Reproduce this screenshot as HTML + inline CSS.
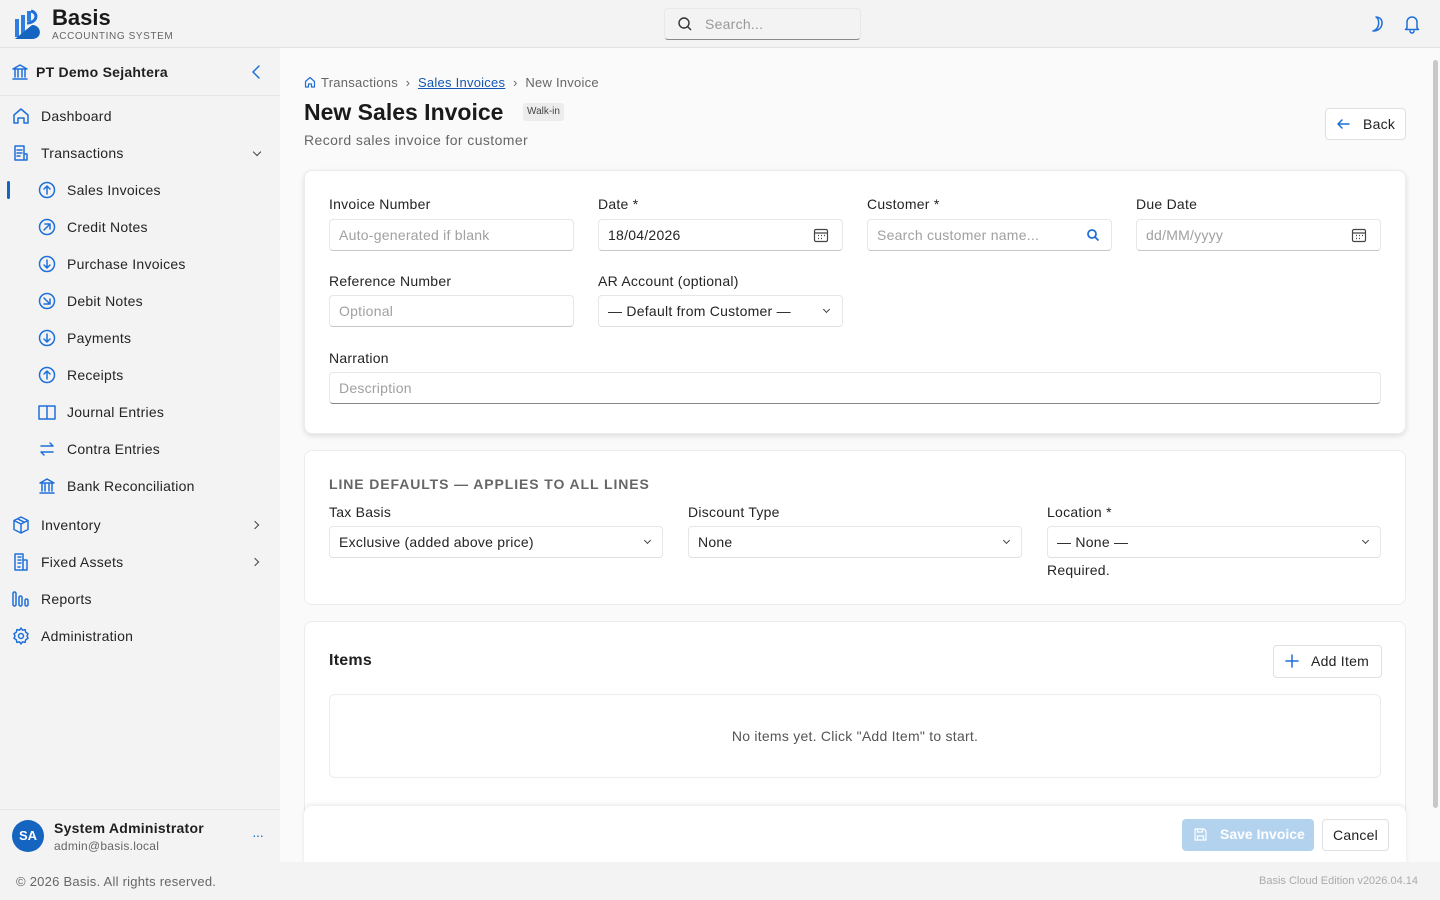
<!DOCTYPE html>
<html><head><meta charset="utf-8"><style>
*{box-sizing:border-box;margin:0;padding:0}
body{width:1440px;height:900px;overflow:hidden;background:#f3f3f3;font-family:"Liberation Sans",sans-serif;color:#1f1f1f;position:relative;font-size:14px;letter-spacing:.25px}
.a{position:absolute}
.ic{position:absolute;stroke:#1e6fd9;fill:none;stroke-width:1.5;stroke-linecap:round;stroke-linejoin:round}
.nav{position:absolute;font-size:14px;color:#242424}
.lbl{position:absolute;font-size:14px;color:#242424}
.inp{position:absolute;height:32px;background:#fff;border:1px solid #e6e6e6;border-bottom-color:#c8c8c8;border-radius:4px;font-size:14px;padding:0 9px;line-height:30px;color:#a0a0a0}
.inp.v{color:#242424}
.card{position:absolute;background:#fff;border:1px solid #ececec;border-radius:8px}
.chev{position:absolute;width:6px;height:6px;border-right:1.3px solid #444;border-bottom:1.3px solid #444;transform:rotate(45deg)}
</style></head><body>
<div class="a" style="left:0;top:0;width:1440px;height:48px;background:#f3f3f3;border-bottom:1px solid #e2e2e2"></div>
<svg class="a" style="left:12px;top:7px" width="30" height="34" viewBox="0 0 30 34"><path d="M3 12h4v18H3zM9 8h4v22H9zM15 4h4v10h-4z" fill="#2d7ee0"/><path d="M3 32 L20 18 C30 18 31 32 20 32 Z" fill="#1565c0"/><path d="M15 16c10 0 12-10 4-12" stroke="#1e6fd9" stroke-width="3" fill="none"/></svg>
<div class="a" style="left:52px;top:5px;font-size:22px;font-weight:bold;color:#1a1a1a;letter-spacing:0">Basis</div>
<div class="a" style="left:52px;top:31px;font-size:10px;letter-spacing:.6px;color:#666">ACCOUNTING SYSTEM</div>
<div class="a" style="left:664px;top:8px;width:197px;height:32px;background:#f3f3f3;border:1px solid #e8e8e8;border-bottom:1px solid #8a8a8a;border-radius:4px"></div>
<svg class="a" style="left:677px;top:16px" width="16" height="16" viewBox="0 0 16 16" fill="none" stroke="#333" stroke-width="1.4"><circle cx="7" cy="7" r="5"/><path d="M10.5 10.5L14 14"/></svg>
<div class="a" style="left:705px;top:16px;color:#999;font-size:14px">Search...</div>
<svg class="ic" style="left:1367px;top:15px" width="18" height="18" viewBox="0 0 18 18"><path d="M9 2c4 2 4 12-3 14 5 0 9-3 9-8S11 2 9 2z"/></svg>
<svg class="ic" style="left:1403px;top:14px" width="18" height="20" viewBox="0 0 18 20"><path d="M4 14V8a5 5 0 0110 0v6l1.5 1.5h-13z M7 17a2 2 0 004 0"/></svg>
<div class="a" style="left:0;top:48px;width:280px;height:814px;background:#f3f3f3"></div>
<div class="a" style="left:0;top:95px;width:280px;height:1px;background:#e6e6e6"></div>
<svg class="ic" style="left:11px;top:63px" width="18" height="18" viewBox="0 0 18 18"><path d="M2 6l7-4 7 4zM2 16h14M4 7v7M7 7v7M11 7v7M14 7v7"/></svg>
<div class="a" style="left:36px;top:64px;font-size:14px;font-weight:bold">PT Demo Sejahtera</div>
<svg class="ic" style="left:250px;top:64px" width="12" height="16" viewBox="0 0 12 16"><path d="M9 2L3 8l6 6"/></svg>
<svg class="ic" style="left:12px;top:107px" width="18" height="18" viewBox="0 0 18 18"><path d="M2 16V8l7-6 7 6v8h-4v-5H6v5z"/></svg>
<div class="nav" style="left:41px;top:108px">Dashboard</div>
<svg class="ic" style="left:12px;top:144px" width="18" height="18" viewBox="0 0 18 18"><path d="M3 2h9v14H3zM12 10h3v6h-3M5 6h5M5 9h5M5 12h3"/></svg>
<div class="nav" style="left:41px;top:145px">Transactions</div>
<div class="chev" style="left:254px;top:149px"></div>
<div class="a" style="left:7px;top:181px;width:3px;height:18px;background:#1565c0;border-radius:2px"></div>
<svg class="ic" style="left:38px;top:181px" width="18" height="18" viewBox="0 0 18 18"><circle cx="9" cy="9" r="7.5"/><path d="M9 13V5M6 8l3-3 3 3"/></svg>
<div class="nav" style="left:67px;top:182px">Sales Invoices</div>
<svg class="ic" style="left:38px;top:218px" width="18" height="18" viewBox="0 0 18 18"><circle cx="9" cy="9" r="7.5"/><path d="M6 12l6-6M7 6h5v5"/></svg>
<div class="nav" style="left:67px;top:219px">Credit Notes</div>
<svg class="ic" style="left:38px;top:255px" width="18" height="18" viewBox="0 0 18 18"><circle cx="9" cy="9" r="7.5"/><path d="M9 5v8M6 10l3 3 3-3"/></svg>
<div class="nav" style="left:67px;top:256px">Purchase Invoices</div>
<svg class="ic" style="left:38px;top:292px" width="18" height="18" viewBox="0 0 18 18"><circle cx="9" cy="9" r="7.5"/><path d="M6 6l6 6M6 12h6V7"/></svg>
<div class="nav" style="left:67px;top:293px">Debit Notes</div>
<svg class="ic" style="left:38px;top:329px" width="18" height="18" viewBox="0 0 18 18"><circle cx="9" cy="9" r="7.5"/><path d="M9 5v8M6 10l3 3 3-3"/></svg>
<div class="nav" style="left:67px;top:330px">Payments</div>
<svg class="ic" style="left:38px;top:366px" width="18" height="18" viewBox="0 0 18 18"><circle cx="9" cy="9" r="7.5"/><path d="M9 13V5M6 8l3-3 3 3"/></svg>
<div class="nav" style="left:67px;top:367px">Receipts</div>
<svg class="ic" style="left:38px;top:403px" width="18" height="18" viewBox="0 0 18 18"><path d="M1 3h16v13H1zM9 3v13"/></svg>
<div class="nav" style="left:67px;top:404px">Journal Entries</div>
<svg class="ic" style="left:38px;top:440px" width="18" height="18" viewBox="0 0 18 18"><path d="M3 6h12M12 3l3 3M15 12H3M6 15l-3-3"/></svg>
<div class="nav" style="left:67px;top:441px">Contra Entries</div>
<svg class="ic" style="left:38px;top:477px" width="18" height="18" viewBox="0 0 18 18"><path d="M2 6l7-4 7 4zM2 16h14M4 7v7M7 7v7M11 7v7M14 7v7"/></svg>
<div class="nav" style="left:67px;top:478px">Bank Reconciliation</div>
<svg class="ic" style="left:12px;top:516px" width="18" height="18" viewBox="0 0 18 18"><path d="M9 1l7 3.5v9L9 17l-7-3.5v-9zM2 4.5L9 8l7-3.5M9 8v9M5.5 2.8l7 3.5"/></svg>
<div class="nav" style="left:41px;top:517px">Inventory</div>
<div class="chev" style="left:252px;top:522px;transform:rotate(-45deg)"></div>
<svg class="ic" style="left:12px;top:553px" width="18" height="18" viewBox="0 0 18 18"><path d="M3 1h8v16H3zM11 7h4v10h-4M6 4h1M8 4h1M6 7h1M8 7h1M6 10h1M8 10h1M6 14h2"/></svg>
<div class="nav" style="left:41px;top:554px">Fixed Assets</div>
<div class="chev" style="left:252px;top:559px;transform:rotate(-45deg)"></div>
<svg class="ic" style="left:12px;top:590px" width="18" height="18" viewBox="0 0 18 18"><rect x="1" y="2" width="3" height="14" rx="1.5"/><rect x="7" y="6" width="3" height="10" rx="1.5"/><rect x="13" y="9" width="3" height="7" rx="1.5"/></svg>
<div class="nav" style="left:41px;top:591px">Reports</div>
<svg class="ic" style="left:12px;top:627px" width="18" height="18" viewBox="0 0 18 18"><circle cx="9" cy="9" r="2.5"/><path d="M9 1l1.5 2.2 2.6-.6.6 2.6L16 6.7 15 9l1 2.3-2.3 1.5-.6 2.6-2.6-.6L9 17l-1.5-2.2-2.6.6-.6-2.6L2 11.3 3 9 2 6.7l2.3-1.5.6-2.6 2.6.6z"/></svg>
<div class="nav" style="left:41px;top:628px">Administration</div>
<div class="a" style="left:0;top:809px;width:280px;height:1px;background:#e6e6e6"></div>
<div class="a" style="left:12px;top:820px;width:32px;height:32px;border-radius:50%;background:#1565c0;color:#fff;font-weight:bold;font-size:13px;text-align:center;line-height:32px;letter-spacing:0">SA</div>
<div class="a" style="left:54px;top:820px;font-size:14px;font-weight:bold">System Administrator</div>
<div class="a" style="left:54px;top:839px;font-size:12px;color:#666">admin@basis.local</div>
<div class="a" style="left:252px;top:827px;font-size:14px;color:#1e6fd9;letter-spacing:-1px">···</div>
<div class="a" style="left:16px;top:874px;font-size:13px;color:#666">© 2026 Basis. All rights reserved.</div>
<div class="a" style="left:280px;top:48px;width:1160px;height:814px;background:#fafafa"></div>
<div class="a" style="left:1433px;top:60px;width:5px;height:748px;background:#c8c8c8;border-radius:3px"></div>
<svg class="ic" style="left:304px;top:76px;stroke-width:1.2" width="12" height="12" viewBox="0 0 12 12"><path d="M1.5 11V5.5L6 1.5l4.5 4V11h-3V8h-3v3z"/></svg>
<div class="a" style="left:321px;top:75px;font-size:13px;color:#666">Transactions &nbsp;›&nbsp; <span style="color:#1557b0;text-decoration:underline">Sales Invoices</span> &nbsp;›&nbsp; New Invoice</div>
<div class="a" style="left:304px;top:99px;font-size:23px;font-weight:bold;color:#1a1a1a;letter-spacing:0">New Sales Invoice</div>
<div class="a" style="left:523px;top:103px;height:18px;padding:0 4px;background:#ececec;border-radius:3px;font-size:10px;line-height:18px;color:#444;letter-spacing:0">Walk-in</div>
<div class="a" style="left:304px;top:132px;font-size:14px;color:#666;letter-spacing:.4px">Record sales invoice for customer</div>
<div class="a" style="left:1325px;top:108px;width:81px;height:32px;background:#fff;border:1px solid #e0e0e0;border-radius:4px"></div>
<svg class="ic" style="left:1336px;top:117px" width="14" height="14" viewBox="0 0 14 14"><path d="M13 7H2M6 3L2 7l4 4"/></svg>
<div class="a" style="left:1363px;top:116px;font-size:14px">Back</div>
<div class="card" style="left:304px;top:170px;width:1102px;height:264px;box-shadow:0 2px 6px rgba(0,0,0,.12)"></div>
<div class="lbl" style="left:329px;top:196px">Invoice Number</div>
<div class="inp" style="left:329px;top:219px;width:245px">Auto-generated if blank</div>
<div class="lbl" style="left:598px;top:196px">Date *</div>
<div class="inp v" style="left:598px;top:219px;width:245px">18/04/2026</div>
<svg class="a" style="left:813px;top:227px" width="16" height="16" viewBox="0 0 16 16" fill="none" stroke="#444" stroke-width="1.2"><rect x="1.5" y="2.5" width="13" height="12" rx="1.5"/><path d="M1.5 6h13M5 8.5h1M8 8.5h1M11 8.5h1M5 11.5h1M8 11.5h1"/></svg>
<div class="lbl" style="left:867px;top:196px">Customer *</div>
<div class="inp" style="left:867px;top:219px;width:245px">Search customer name...</div>
<svg class="a" style="left:1086px;top:228px" width="14" height="14" viewBox="0 0 14 14" fill="none" stroke="#1e6fd9" stroke-width="1.8"><circle cx="6" cy="6" r="4"/><path d="M9 9l3.5 3.5"/></svg>
<div class="lbl" style="left:1136px;top:196px">Due Date</div>
<div class="inp" style="left:1136px;top:219px;width:245px">dd/MM/yyyy</div>
<svg class="a" style="left:1351px;top:227px" width="16" height="16" viewBox="0 0 16 16" fill="none" stroke="#444" stroke-width="1.2"><rect x="1.5" y="2.5" width="13" height="12" rx="1.5"/><path d="M1.5 6h13M5 8.5h1M8 8.5h1M11 8.5h1M5 11.5h1M8 11.5h1"/></svg>
<div class="lbl" style="left:329px;top:273px">Reference Number</div>
<div class="inp" style="left:329px;top:295px;width:245px">Optional</div>
<div class="lbl" style="left:598px;top:273px">AR Account (optional)</div>
<div class="inp v" style="left:598px;top:295px;width:245px;border-bottom-color:#e0e0e0">— Default from Customer —</div>
<div class="chev" style="left:824px;top:307px;width:5px;height:5px"></div>
<div class="lbl" style="left:329px;top:350px">Narration</div>
<div class="inp" style="left:329px;top:372px;width:1052px;border-bottom-color:#888">Description</div>
<div class="card" style="left:304px;top:450px;width:1102px;height:155px"></div>
<div class="a" style="left:329px;top:476px;font-size:14px;font-weight:bold;color:#666;letter-spacing:.9px">LINE DEFAULTS — APPLIES TO ALL LINES</div>
<div class="lbl" style="left:329px;top:504px">Tax Basis</div>
<div class="inp v" style="left:329px;top:526px;width:334px;border-bottom-color:#e0e0e0">Exclusive (added above price)</div>
<div class="chev" style="left:645px;top:538px;width:5px;height:5px"></div>
<div class="lbl" style="left:688px;top:504px">Discount Type</div>
<div class="inp v" style="left:688px;top:526px;width:334px;border-bottom-color:#e0e0e0">None</div>
<div class="chev" style="left:1004px;top:538px;width:5px;height:5px"></div>
<div class="lbl" style="left:1047px;top:504px">Location *</div>
<div class="inp v" style="left:1047px;top:526px;width:334px;border-bottom-color:#e0e0e0">— None —</div>
<div class="chev" style="left:1363px;top:538px;width:5px;height:5px"></div>
<div class="lbl" style="left:1047px;top:562px">Required.</div>
<div class="card" style="left:304px;top:621px;width:1102px;height:200px"></div>
<div class="a" style="left:329px;top:652px;font-size:16px;font-weight:bold">Items</div>
<div class="a" style="left:1273px;top:645px;width:109px;height:33px;background:#fff;border:1px solid #e0e0e0;border-radius:4px"></div>
<svg class="ic" style="left:1285px;top:654px" width="14" height="14" viewBox="0 0 14 14"><path d="M7 1v12M1 7h12"/></svg>
<div class="a" style="left:1311px;top:653px;font-size:14px">Add Item</div>
<div class="a" style="left:329px;top:694px;width:1052px;height:84px;border:1px solid #ececec;border-radius:6px;background:#fff"></div>
<div class="a" style="left:329px;top:728px;width:1052px;text-align:center;font-size:14px;color:#555">No items yet. Click "Add Item" to start.</div>
<div class="a" style="left:304px;top:806px;width:1102px;height:60px;background:#fff;border-radius:8px 8px 0 0;box-shadow:0 -2px 5px rgba(0,0,0,.08)"></div>
<div class="a" style="left:1182px;top:819px;width:132px;height:32px;background:#b3d2ee;border-radius:4px"></div>
<svg class="a" style="left:1193px;top:827px" width="15" height="15" viewBox="0 0 15 15" fill="none" stroke="#fff" stroke-width="1.2"><path d="M2 2h9l2 2v9H2zM4.5 2v3h5V2M4.5 13V9h6v4"/></svg>
<div class="a" style="left:1220px;top:826px;font-size:14px;font-weight:bold;color:#fff;letter-spacing:0">Save Invoice</div>
<div class="a" style="left:1322px;top:819px;width:67px;height:32px;background:#fff;border:1px solid #e0e0e0;border-radius:4px;text-align:center;line-height:30px;font-size:14px">Cancel</div>
<div class="a" style="left:280px;top:862px;width:1160px;height:38px;background:#f3f3f3"></div>
<div class="a" style="left:1259px;top:875px;font-size:11px;color:#aaa;letter-spacing:0">Basis Cloud Edition v2026.04.14</div>
</body></html>
